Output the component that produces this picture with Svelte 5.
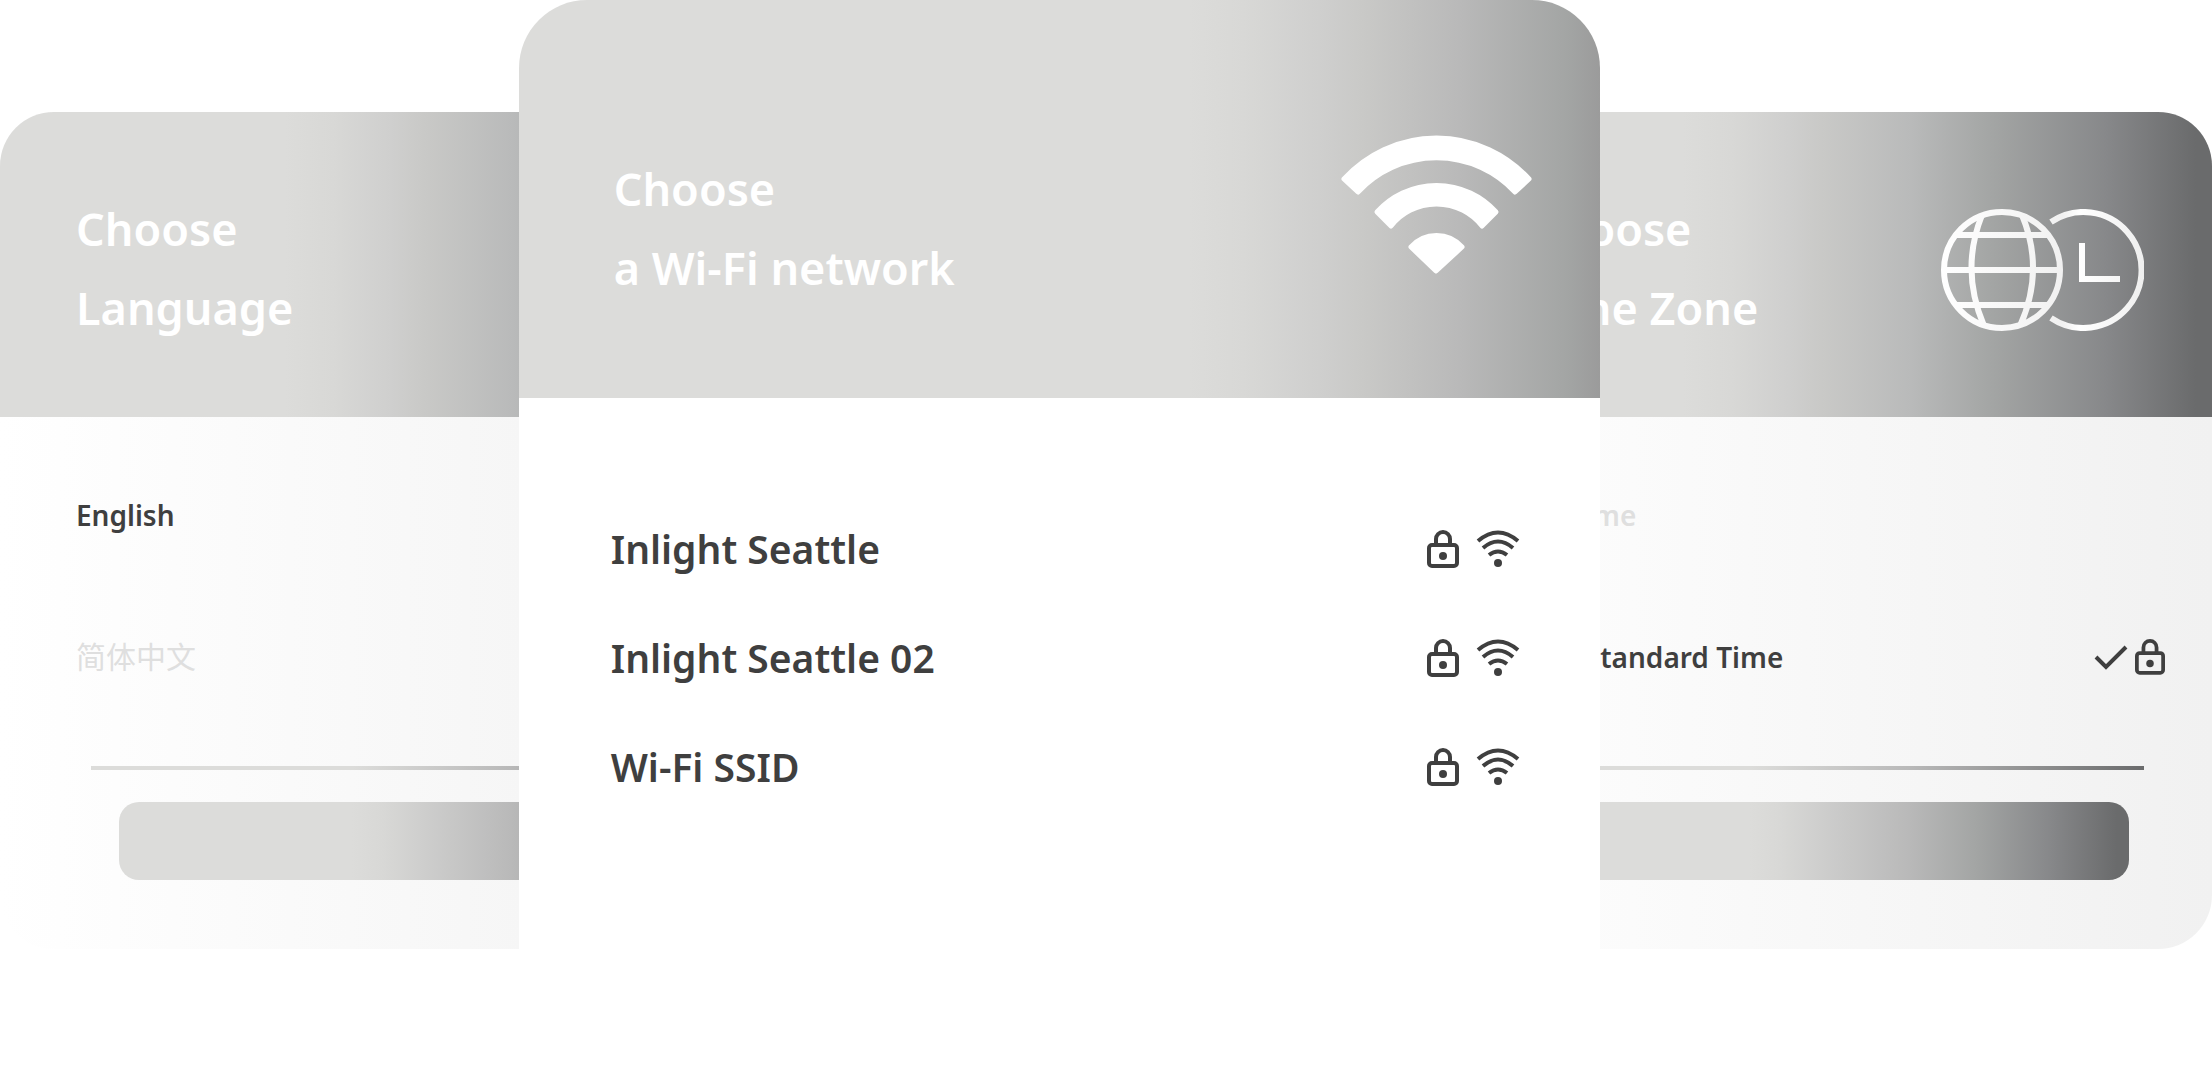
<script lang="ts">
	type Option = { label: string; lang?: string; selected?: boolean; locked?: boolean };

	const languages: Option[] = [
		{ label: 'English', selected: true },
		{ label: '简体中文', lang: 'zh' }
	];
	const networks: string[] = ['Inlight Seattle', 'Inlight Seattle 02', 'Wi-Fi SSID'];
	const timeZones: Option[] = [
		{ label: 'Pacific Time' },
		{ label: 'Eastern Standard Time', selected: true, locked: true }
	];
</script>

{#snippet lockIcon()}
	<svg class="lock" viewBox="0 0 32 38" aria-hidden="true">
		<rect x="2" y="15" width="28" height="21" rx="3" />
		<path d="M9 15V9a7 7 0 0 1 7-7 7 7 0 0 1 7 7v6" />
		<circle class="dot" cx="16" cy="26" r="4" />
	</svg>
{/snippet}

{#snippet signalIcon()}
	<svg class="signal" viewBox="0 0 44 38" aria-hidden="true">
		<path d="M2 11Q22-6 42 11M7 18Q22 5 37 18M13 25Q22 18 31 25" />
		<circle class="dot" cx="22" cy="33" r="4" />
	</svg>
{/snippet}

{#snippet optionList(options: Option[])}
	<ul class="options">
		{#each options as option (option.label)}
			<li>
				<button type="button" class="option" class:selected={option.selected} lang={option.lang}>
					<span class="label">{option.label}</span>
					{#if option.locked}
						<svg class="check" viewBox="0 0 34 26" aria-hidden="true">
							<path d="M2 13L12 23L32 3" />
						</svg>
						{@render lockIcon()}
					{/if}
				</button>
			</li>
		{/each}
	</ul>
{/snippet}

<main class="stage">
	<section class="card side language">
		<header>
			<h2>Choose<br />Language</h2>
		</header>
		<div class="body">
			{@render optionList(languages)}
			<hr />
			<button type="button" class="next" aria-label="Next"></button>
		</div>
	</section>

	<section class="card side zone">
		<header>
			<h2>Choose<br />Time Zone</h2>
			<svg class="globe" viewBox="0 0 203 122" aria-hidden="true">
				<defs>
					<linearGradient id="shine" gradientUnits="userSpaceOnUse" x1="0" y1="0" x2="203" y2="0">
						<stop offset="0" stop-color="#fff" />
						<stop offset="0.6" stop-color="#f1f1f1" />
						<stop offset="0.68" stop-color="#fff" />
						<stop offset="1" stop-color="#efefef" />
					</linearGradient>
				</defs>
				<circle cx="61" cy="61" r="58" />
				<path d="M3 61H119M15 26H107M15 96H107" />
				<path d="M41 6Q19 61 43 117M81 6Q104 61 79 117" />
				<path d="M110 13A58 58 0 1 1 110 109" />
				<path d="M141 34V70H179" />
			</svg>
		</header>
		<div class="body">
			{@render optionList(timeZones)}
			<hr />
			<button type="button" class="next" aria-label="Next"></button>
		</div>
	</section>

	<section class="card network">
		<header>
			<h2>Choose<br />a Wi-Fi network</h2>
			<svg class="wifi" viewBox="0 0 191 139" aria-hidden="true">
				<path d="M3 44A125 125 0 0 1 188 44L174 57A107 107 0 0 0 17 57Z" />
				<path d="M36 77A80 80 0 0 1 155 77L141 91A58 58 0 0 0 50 91Z" />
				<path d="M70 112A34 34 0 0 1 121 112L95 136Z" />
			</svg>
		</header>
		<div class="body">
			<ul class="options">
				{#each networks as network (network)}
					<li>
						<button type="button" class="option selected">
							<span class="label">{network}</span>
							{@render lockIcon()}
							{@render signalIcon()}
						</button>
					</li>
				{/each}
			</ul>
		</div>
	</section>
</main>

<style>
	:global(body) {
		background: #fff;
	}
	/* The three cards share one grid cell, the network card lies on top. */
	.stage {
		display: grid;
		grid-template-columns: 100%;
		align-items: start;
		overflow: hidden;
		font-family: 'Noto Sans', 'Noto Sans CJK SC', sans-serif;
		font-weight: 600;
		color: #3f3f3f;
	}
	.card {
		grid-area: 1 / 1;
		overflow: hidden;
	}
	.side {
		width: 36.8%;
		margin-top: 112px;
		border-radius: 54px;
		background: linear-gradient(90deg, #fff, #f1f1f1);
	}
	.zone {
		justify-self: end;
	}
	.network {
		width: 48.9%;
		margin-left: 23.45%;
		border-radius: 68px 68px 0 0;
		background: #fff;
	}

	header {
		display: flex;
		justify-content: space-between;
		align-items: flex-start;
		box-sizing: border-box;
		padding: 77px 68px 70px 76px;
		background: linear-gradient(
			90deg,
			#dcdcda 35%,
			#d8d8d6 41%,
			#cfcfce 48%,
			#c9c9c7 52%,
			#b9baba 63%,
			#a3a5a4 73%,
			#87888a 87%,
			#6a6b6c 98%
		);
	}
	.zone header {
		padding-left: 132px;
	}
	.network header {
		padding: 149px 68px 91px 95px;
		background: linear-gradient(
			90deg,
			#dcdcda 62%,
			#d8d8d6 67%,
			#cfcfce 74%,
			#c9c9c7 78%,
			#b9b9b9 87%,
			#a3a5a4 97%,
			#9b9b9b 100%
		);
	}
	h2 {
		margin: 0;
		font-size: 45px;
		font-weight: 600;
		line-height: 79px;
		white-space: nowrap;
		color: #fff;
	}
	.globe {
		width: 203px;
		margin-top: 20px;
	}
	.globe * {
		fill: none;
		stroke: url(#shine);
		stroke-width: 6;
	}
	.wifi {
		width: 191px;
		margin-top: -14px;
		fill: #fff;
		stroke: #fff;
		stroke-width: 5;
		stroke-linejoin: round;
	}

	.side .body {
		padding: 27px 0 69px;
	}
	.network .body {
		padding: 96px 0 129px;
	}
	.options {
		list-style: none;
		margin: 0;
		padding: 0 47px 0 76px;
	}
	.network .options {
		padding: 0 80px 0 92px;
	}
	.option {
		display: flex;
		align-items: center;
		width: 100%;
		padding: 0;
		border: 0;
		background: none;
		font: inherit;
		font-size: 28px;
		line-height: 142px;
		text-align: left;
		white-space: nowrap;
		color: #dfdfdf;
		cursor: pointer;
	}
	.option:lang(zh) {
		font-size: 30px;
		font-weight: 400;
	}
	.network .option {
		font-size: 39px;
		line-height: 109px;
	}
	.option.selected {
		color: #3f3f3f;
	}
	.label {
		flex: 1;
	}
	.option svg {
		fill: none;
		stroke: currentColor;
		stroke-width: 4;
	}
	.option .dot {
		fill: currentColor;
		stroke: none;
	}
	.lock {
		width: 32px;
	}
	.side .lock {
		width: 30px;
		margin-left: 7px;
	}
	.signal {
		width: 44px;
		margin-left: 17px;
	}
	.check {
		width: 34px;
	}

	hr {
		height: 4px;
		margin: 38px 68px 0 91px;
		border: 0;
		background: linear-gradient(90deg, #dcdcda 40%, #b9b9b9 64%, #6a6b6c);
	}
	.next {
		display: block;
		width: calc(100% - 202px);
		height: 78px;
		margin: 32px 0 0 119px;
		border: 0;
		border-radius: 20px;
		background: linear-gradient(
			90deg,
			#dcdcda 38%,
			#d8d8d6 43%,
			#cfcfce 49%,
			#b9b9b9 64%,
			#a3a5a4 75%,
			#87888a 87%,
			#6a6b6c 98%
		);
		cursor: pointer;
	}
</style>
